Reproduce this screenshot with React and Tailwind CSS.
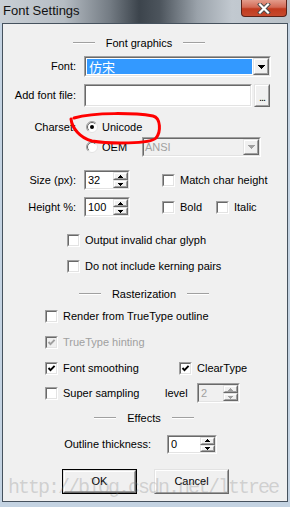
import React from 'react';

// classic win32 3D borders
const Sunken = ({ className = '', inner = 'bg-white', children }) => (
  <div className={`flex shrink-0 border border-t-[#a0a0a0] border-l-[#a0a0a0] border-r-white border-b-white ${className}`}>
    <div className={`flex flex-1 min-w-0 border border-t-[#696969] border-l-[#696969] border-r-[#e3e3e3] border-b-[#e3e3e3] ${inner}`}>
      {children}
    </div>
  </div>
);

const Raised = ({ className = '', children }) => (
  <div className={`flex shrink-0 border border-t-[#e3e3e3] border-l-[#e3e3e3] border-r-[#696969] border-b-[#696969] bg-[#f0f0f0] ${className}`}>
    <div className="flex flex-1 items-center justify-center border border-t-white border-l-white border-r-[#a0a0a0] border-b-[#a0a0a0]">
      {children}
    </div>
  </div>
);

const Arrow = ({ up, w = 7, h = 4, color = '#000' }) => (
  <svg width={w} height={h} viewBox={`0 0 ${w} ${h}`} shapeRendering="crispEdges">
    <polygon points={up ? `${w / 2},0 ${w},${h} 0,${h}` : `0,0 ${w},0 ${w / 2},${h}`} fill={color} />
  </svg>
);

const Spin = ({ value, className = '', disabled }) => (
  <Sunken className={className} inner={disabled ? 'bg-[#f0f0f0]' : 'bg-white'}>
    <div className={`flex-1 flex items-center pl-[2px] ${disabled ? 'text-[#a0a0a0]' : ''}`}>{value}</div>
    <div className="flex flex-col w-[15px]">
      <Raised className="flex-1">
        <Arrow up w={5} h={3} color={disabled ? '#a0a0a0' : '#000'} />
      </Raised>
      <Raised className="flex-1">
        <Arrow w={5} h={3} color={disabled ? '#a0a0a0' : '#000'} />
      </Raised>
    </div>
  </Sunken>
);

const Box = ({ checked, disabled }) => (
  <Sunken className="w-[13px] h-[13px]" inner={disabled ? 'bg-[#f0f0f0]' : 'bg-white'}>
    {checked && (
      <svg width="9" height="9" viewBox="0 0 9 9" className="m-auto">
        <path d="M1.5 4 L3.5 6.2 L7.6 1.8" fill="none" stroke={disabled ? '#a0a0a0' : '#000'} strokeWidth="1.9" />
      </svg>
    )}
  </Sunken>
);

const CheckItem = ({ label, checked, disabled, className = '' }) => (
  <div className={`flex items-center shrink-0 ${className}`}>
    <Box checked={checked} disabled={disabled} />
    <span className={`ml-[5px] whitespace-nowrap ${disabled ? 'text-[#a0a0a0]' : ''}`}>{label}</span>
  </div>
);

const Radio = ({ on }) => (
  <svg width="12" height="12" viewBox="0 0 12 12" className="shrink-0">
    <circle cx="6" cy="6" r="5.5" fill="#fff" stroke="#e3e3e3" />
    <path d="M2.1 9.9 A5.5 5.5 0 0 1 9.9 2.1" fill="none" stroke="#a0a0a0" />
    <path d="M2.8 9.2 A4.5 4.5 0 0 1 9.2 2.8" fill="none" stroke="#696969" />
    {on && <circle cx="6" cy="6" r="2" fill="#000" />}
  </svg>
);

const Heading = ({ title, className = '' }) => (
  <div className={`flex items-center justify-center h-[14px] shrink-0 ${className}`}>
    <span className="w-[22px] border-t border-t-[#a0a0a0] border-b border-b-white" />
    <span className="mx-[11px] whitespace-nowrap">{title}</span>
    <span className="w-[22px] border-t border-t-[#a0a0a0] border-b border-b-white" />
  </div>
);

const Label = ({ children, className = 'w-[73px]' }) => (
  <span className={`${className} shrink-0 text-right whitespace-nowrap`}>{children}</span>
);

export default function App() {
  return (
    <div className="relative w-[290px] h-[507px] overflow-hidden bg-[#c4d3e2] font-['Liberation_Sans',Arial,sans-serif] text-[11px] leading-[13px] text-black select-none">
      {/* title bar */}
      <div className="h-[23px] flex items-start bg-[linear-gradient(90deg,#c9cfd5_0%,#b5bcc3_22%,#737b83_38%,#3c444c_48%,#4c545c_55%,#9aa2aa_68%,#c2c9d0_80%,#b9c1c8_100%)]">
        <span className="pl-[3px] pt-[4px] text-[13px] leading-[13px] text-[#111]">Font Settings</span>
        <div className="ml-auto mr-[3px] w-[46px] h-[17px] rounded-b-[4px] border border-t-0 border-[#5b2218] bg-[linear-gradient(180deg,#e39c8b_0%,#d36a55_45%,#c13a1e_55%,#c64a2e_100%)] flex items-center justify-center">
          <svg width="14" height="11" viewBox="0 0 14 11">
            <path d="M3 1.5 L11 9.5 M11 1.5 L3 9.5" stroke="#4a4a4a" strokeWidth="4" strokeLinecap="square" />
            <path d="M3 1.5 L11 9.5 M11 1.5 L3 9.5" stroke="#fff" strokeWidth="2.2" strokeLinecap="square" />
          </svg>
        </div>
      </div>

      <div className="flex h-[479px]">
        <div className="w-[2px] shrink-0" />
        <div className="w-[286px] border border-[#46525e] bg-[#f0f0f0] flex flex-col">
          <Heading title="Font graphics" className="mt-[12px] w-[272px]" />

          <div className="flex items-center h-[21px] mt-[6px] shrink-0">
            <Label>Font:</Label>
            <Sunken className="ml-[8px] w-[187px] h-full">
              <div className="flex-1 m-[1px] bg-[#3399ff] text-white flex items-center pl-[2px] text-[13px] font-['Noto_Sans_CJK_SC',sans-serif]">仿宋</div>
              <Raised className="w-[16px]">
                <Arrow />
              </Raised>
            </Sunken>
          </div>

          <div className="flex items-center h-[23px] mt-[7px] shrink-0">
            <Label>Add font file:</Label>
            <Sunken className="ml-[8px] w-[168px] h-full" />
            <Raised className="ml-[2px] w-[16px] h-full">
              <span className="mt-[3px] tracking-[-1px]">...</span>
            </Raised>
          </div>

          <div className="flex items-center h-[16px] mt-[12px] shrink-0">
            <Label>Charset:</Label>
            <span className="ml-[10px] flex">
              <Radio on />
            </span>
            <span className="ml-[4px]">Unicode</span>
          </div>

          <div className="flex items-center h-[20px] mt-[2px] shrink-0">
            <div className="w-[83px] shrink-0" />
            <Radio />
            <span className="ml-[4px] w-[40px] shrink-0">OEM</span>
            <Sunken className="w-[119px] h-full" inner="bg-[#f0f0f0]">
              <div className="flex-1 flex items-center pl-[1px] text-[#a0a0a0]">ANSI</div>
              <Raised className="w-[16px]">
                <Arrow color="#a0a0a0" />
              </Raised>
            </Sunken>
          </div>

          <div className="flex items-center h-[20px] mt-[13px] shrink-0">
            <Label>Size (px):</Label>
            <Spin value="32" className="ml-[8px] w-[46px] h-full" />
            <CheckItem className="ml-[32px]" label="Match char height" />
          </div>

          <div className="flex items-center h-[20px] mt-[7px] shrink-0">
            <Label>Height %:</Label>
            <Spin value="100" className="ml-[8px] w-[46px] h-full" />
            <CheckItem className="ml-[32px] w-[54px]" label="Bold" />
            <CheckItem label="Italic" />
          </div>

          <CheckItem className="mt-[17px] h-[13px] ml-[64px]" label="Output invalid char glyph" />
          <CheckItem className="mt-[13px] h-[13px] ml-[64px]" label="Do not include kerning pairs" />

          <Heading title="Rasterization" className="mt-[14px] w-[282px]" />

          <CheckItem className="mt-[9px] h-[13px] ml-[42px]" label="Render from TrueType outline" />
          <CheckItem className="mt-[13px] h-[13px] ml-[42px]" label="TrueType hinting" checked disabled />

          <div className="flex items-center h-[13px] mt-[13px] ml-[42px] shrink-0">
            <CheckItem className="w-[134px]" label="Font smoothing" checked />
            <CheckItem label="ClearType" checked />
          </div>

          <div className="flex items-center h-[20px] mt-[8px] ml-[42px] shrink-0">
            <CheckItem className="w-[120px]" label="Super sampling" />
            <span className="w-[32px] shrink-0">level</span>
            <Spin value="2" disabled className="w-[43px] h-full" />
          </div>

          <Heading title="Effects" className="mt-[8px] w-[282px]" />

          <div className="flex items-center h-[19px] mt-[10px] shrink-0">
            <Label className="w-[148px]">Outline thickness:</Label>
            <Spin value="0" className="ml-[16px] w-[50px] h-full" />
          </div>

          <div className="flex h-[25px] mt-[15px] ml-[59px] shrink-0">
            <div className="flex w-[75px] border border-black">
              <Raised className="flex-1">OK</Raised>
            </div>
            <Raised className="ml-[17px] w-[75px]">Cancel</Raised>
          </div>
        </div>
      </div>

      {/* red marker around the Unicode option */}
      <svg className="absolute left-0 top-0 pointer-events-none" width="290" height="507" viewBox="0 0 290 507">
        <path
          d="M74 118 C95 112, 135 113, 153 116 C161 118, 161 132, 156 138 C150 144, 110 144, 92 141 C80 138, 72 128, 71 119"
          fill="none"
          stroke="#ff0000"
          strokeWidth="3"
          strokeLinecap="round"
        />
      </svg>

      {/* watermark */}
      <div className="absolute left-[8px] top-[476px] pointer-events-none whitespace-nowrap font-['Liberation_Mono',monospace] text-[20px] leading-[24px] tracking-[-2px] text-[#808080]/30">
        http://blog.csdn.net/lttree
      </div>
    </div>
  );
}
